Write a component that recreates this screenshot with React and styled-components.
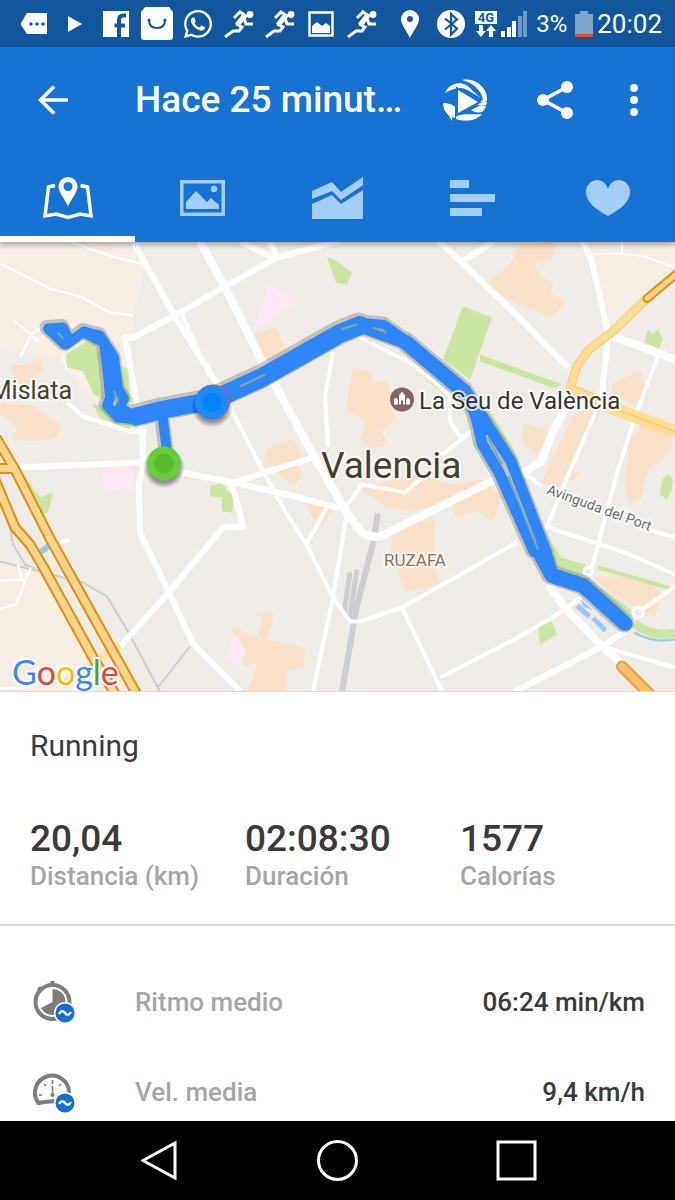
import React from 'react';
import styled, { createGlobalStyle } from 'styled-components';
import { FaWhatsapp } from 'react-icons/fa';

const GlobalStyle = createGlobalStyle`
  * {
    box-sizing: border-box;
  }
  body {
    margin: 0;
    background: #fff;
    color: #3a3a3a;
    font-family: Roboto, 'Noto Sans', sans-serif;
  }
  button {
    border: 0;
    padding: 0;
    background: none;
    color: inherit;
    cursor: pointer;
  }
  svg {
    display: block;
  }
`;

const Screen = styled.div`
  display: flex;
  flex-direction: column;
  height: 100vh;
`;

const StatusBar = styled.div`
  display: flex;
  flex: none;
  align-items: center;
  justify-content: space-between;
  height: 47px;
  padding: 0 13px;
  background: #12579d;
  color: #fff;
`;

const StatusGroup = styled.div`
  display: flex;
  align-items: center;
  gap: ${(props) => props.$gap || 0}px;
`;

const StatusSlot = styled.span`
  display: flex;
  justify-content: center;
  width: 41px;
`;

const StatusText = styled.span`
  font-size: ${(props) => (props.$large ? 26 : 24)}px;
  line-height: 32px;
  padding: 0 ${(props) => (props.$large ? 0 : 4)}px;
`;

const Header = styled.header`
  position: relative;
  flex: none;
  background: #1673d3;
  color: #fff;
  box-shadow: 0 2px 6px rgba(0, 0, 0, 0.4);
`;

const ActionBar = styled.div`
  display: flex;
  align-items: center;
  height: 106px;
  padding-right: 8px;
`;

const IconButton = styled.button`
  display: flex;
  flex: none;
  align-items: center;
  justify-content: center;
  width: ${(props) => props.$width}px;
  height: 90px;
`;

const Title = styled.h1`
  flex: 1;
  min-width: 0;
  margin: 0 0 0 30px;
  overflow: hidden;
  white-space: nowrap;
  font-size: 37px;
  font-weight: 500;
  line-height: 48px;
`;

const Tabs = styled.nav`
  display: flex;
  height: 89px;
`;

const Tab = styled.button`
  display: flex;
  flex: 1;
  align-items: center;
  justify-content: center;
  box-shadow: ${(props) => (props.$active ? 'inset 0 -6px #fff' : 'none')};
  color: ${(props) => (props.$active ? '#fff' : '#a5cef7')};
`;

const MapArea = styled.div`
  flex: none;
  height: 450px;
  overflow: hidden;
  border-bottom: 1px solid #dcdad6;

  svg {
    width: 100%;
    height: 100%;
  }
`;

const Details = styled.main`
  flex: 1;
  min-height: 0;
  overflow-y: auto;
  scrollbar-width: none;
`;

const Summary = styled.section`
  padding: 36px 0 33px 30px;
  border-bottom: 2px solid #e0e0e0;
`;

const Sport = styled.h2`
  margin: 0 0 53px;
  font-size: 30px;
  font-weight: 400;
  line-height: 36px;
`;

const Stats = styled.div`
  display: grid;
  grid-template-columns: repeat(3, 1fr);
`;

const StatValue = styled.div`
  font-size: 37px;
  font-weight: 500;
  line-height: 44px;
`;

const StatLabel = styled.div`
  color: #a6a6a6;
  font-size: 26px;
  font-weight: 500;
  line-height: 30px;
`;

const RowList = styled.ul`
  margin: 0;
  padding: 31px 30px 0 32px;
  list-style: none;
`;

const Row = styled.li`
  display: flex;
  align-items: center;
  height: 90px;
  font-size: 26px;
  font-weight: 500;
  line-height: 30px;
`;

const RowLabel = styled.span`
  flex: 1;
  margin-left: 59px;
  color: #a6a6a6;
`;

const NavBar = styled.nav`
  display: flex;
  flex: none;
  justify-content: center;
  height: 79px;
  background: #000;
  color: #fff;
`;

const NavButton = styled.button`
  display: flex;
  flex: 0 1 179px;
  align-items: center;
  justify-content: center;
`;

/* status bar icons */

const Runner = () => (
  <svg width="30" height="28" viewBox="0 0 30 28" fill="none" stroke="#fff" strokeWidth="3">
    <circle cx="26" cy="4.500" r="3.400" fill="#fff" stroke="none" />
    <path d="M10 8l6-6 6 4-8 9" />
    <path d="M20 6l-7 9" strokeWidth="5" />
    <path d="M12 14l6 3-3 4H9l-8 6M20 8l2 6h7" />
  </svg>
);

const Message = () => (
  <svg width="26" height="22" viewBox="0 0 26 22">
    <path d="M6 0h20v21H6L0 12v-2z" fill="#fff" />
    <g fill="#12579d">
      <circle cx="10" cy="11" r="1.700" />
      <circle cx="16" cy="11" r="1.700" />
      <circle cx="22" cy="11" r="1.700" />
    </g>
  </svg>
);

const Play = () => (
  <svg width="14" height="16" viewBox="0 0 14 16">
    <path d="M0 0l14 8-14 8z" fill="#fff" />
  </svg>
);

const Facebook = () => (
  <svg width="26" height="26" viewBox="0 0 26 26">
    <path d="M0 0h26v26H0z" fill="#fff" />
    <path d="M16 26V9q0-4.500 4.500-4.500H23M11.500 14.500H22" fill="none" stroke="#12579d" strokeWidth="4" />
  </svg>
);

const Bag = () => (
  <svg width="32" height="33" viewBox="0 0 32 33">
    <path d="M4 0h24l4 5v25q0 3-3 3H3q-3 0-3-3V5z" fill="#fff" />
    <path d="M8 13q0 8 8 8t8-8" fill="none" stroke="#12579d" strokeWidth="2" />
    <circle cx="8" cy="13" r="1.600" fill="#12579d" />
    <circle cx="24" cy="13" r="1.600" fill="#12579d" />
  </svg>
);

const Picture = () => (
  <svg width="26" height="26" viewBox="0 0 26 26">
    <path d="M1.500 1.500h23v23h-23z" fill="none" stroke="#fff" strokeWidth="2.400" />
    <path d="M4 22v-7l5-4 5 4 4-3 4 3v7z" fill="#fff" />
  </svg>
);

const Pin = () => (
  <svg width="18" height="28" viewBox="0 0 18 28">
    <path d="M9 0a9 9 0 0 1 9 9c0 6-6 12-9 19C6 21 0 15 0 9a9 9 0 0 1 9-9z" fill="#fff" />
    <circle cx="9" cy="9" r="3" fill="#12579d" />
  </svg>
);

const Bluetooth = () => (
  <svg width="28" height="28" viewBox="0 0 28 28">
    <circle cx="14" cy="14" r="14" fill="#fff" />
    <path d="M8 8.500l12 10-6 6V4l6 5.500L8 19.500" fill="none" stroke="#12579d" strokeWidth="2.200" />
  </svg>
);

const Network = () => (
  <svg width="22" height="28" viewBox="0 0 22 28">
    <path d="M0 1h22v13H0z" fill="#fff" />
    <text x="11" y="12" textAnchor="middle" fontSize="13" fontWeight="700" fill="#12579d">4G</text>
    <path d="M4 15h4v6h3l-5 6-5-6h3zM14 27h4v-6h3l-5-6-5 6h3z" fill="#fff" />
  </svg>
);

const Signal = () => (
  <svg width="27" height="28" viewBox="0 0 27 28" fill="#fff">
    <path d="M0 21h4v6H0zM6 17h4v10H6zM11 11h4v16h-4z" />
    <path d="M17 6h4v21h-4zM22 1h4v26h-4z" opacity=".4" />
  </svg>
);

const Battery = () => (
  <svg width="18" height="28" viewBox="0 0 18 28">
    <path d="M5 1h8v3h5v23H0V4h5z" fill="#7fa4cb" />
    <path d="M0 24h18v3H0z" fill="#dc4b2e" />
  </svg>
);

/* action bar icons */

const BackIcon = () => (
  <svg width="30" height="30" viewBox="0 0 30 30" fill="none" stroke="currentColor" strokeWidth="3.600">
    <path d="M30 15H3M16 1.500L2.500 15 16 28.500" />
  </svg>
);

const ReplayIcon = () => (
  <svg width="44" height="42" viewBox="0 0 44 42" fill="currentColor">
    <path d="M19 1c14-3 26 8 25 21h-4C40 14 32 4 19 1z" />
    <path d="M2 14C6 5 15 2 23 6c5 3 8 8 15 13-6-3-13-9-20-10C12 9 7 11 2 14z" />
    <path d="M0 24c5 0 9 1 12 4v11l-3-1v4l-3-5C2 33 0 29 0 24z" />
    <path d="M28 31l8-4 7 0c-1 3-2 4-4 6-4 1-8 0-11-2zM34 25l5-4 5 2-1 3c-4 1-7 1-9-1z" />
    <path d="M13 37c10-3 18-1 26-2-6 7-16 8-26 5z" />
    <path d="M15 11l20 12-20 11z" stroke="#1673d3" strokeWidth="4" paintOrder="stroke" />
  </svg>
);

const ShareIcon = () => (
  <svg width="36" height="38" viewBox="0 0 36 38" fill="currentColor">
    <path d="M30 6L6 19l24 13" fill="none" stroke="currentColor" strokeWidth="3.600" />
    <circle cx="6" cy="19" r="6" />
    <circle cx="30" cy="6" r="6" />
    <circle cx="30" cy="32" r="6" />
  </svg>
);

const MoreIcon = () => (
  <svg width="8" height="32" viewBox="0 0 8 32" fill="currentColor">
    <circle cx="4" cy="4" r="4" />
    <circle cx="4" cy="16" r="4" />
    <circle cx="4" cy="28" r="4" />
  </svg>
);

/* tab icons */

const MapIcon = () => (
  <svg width="52" height="44" viewBox="0 0 52 44">
    <path
      d="M13 9.500L6.500 11 3 40l11-2 12 3.500L38 38l11 2-3.500-29L38.500 9.500"
      fill="none"
      stroke="currentColor"
      strokeWidth="3.400"
    />
    <path
      d="M26 1a9.500 9.500 0 0 1 9.500 9.500c0 6-5.500 11-9.500 20-4-9-9.500-14-9.500-20A9.500 9.500 0 0 1 26 1zm0 5a4.500 4.500 0 1 0 0 9 4.500 4.500 0 0 0 0-9z"
      fill="currentColor"
    />
  </svg>
);

const PhotoIcon = () => (
  <svg width="45" height="36" viewBox="0 0 45 36" fill="currentColor">
    <path d="M0 0h45v36H0zm3.500 3.500v29h38v-29z" fillRule="evenodd" />
    <path d="M6 22l10-11 11 11 4-4 8 7v4H6z" />
    <circle cx="34" cy="9" r="3.200" />
  </svg>
);

const ChartIcon = () => (
  <svg width="51" height="42" viewBox="0 0 51 42" fill="currentColor">
    <path d="M0 14L20 5l9 10L51 0v8L29 23l-9-9L0 22z" />
    <path d="M0 27l20-9 9 9 22-14v29H0z" />
  </svg>
);

const LapsIcon = () => (
  <svg width="45" height="36" viewBox="0 0 45 36" fill="currentColor">
    <path d="M0 0h19v8H0zM0 14h45v8H0zM0 28h32v8H0z" />
  </svg>
);

const HeartIcon = () => (
  <svg width="46" height="38" viewBox="0 0 46 38" fill="currentColor">
    <path d="M23 37C12 31 1 24 1 13A11.500 11.500 0 0 1 12 1c5 0 9 3 11 9 2-6 6-9 11-9a11.500 11.500 0 0 1 11 12c0 11-11 18-22 24z" />
  </svg>
);

/* list icons */

const Average = () => (
  <g stroke="none">
    <circle cx="33" cy="33" r="11" fill="#fff" />
    <circle cx="33" cy="33" r="9.500" fill="#136fd0" />
    <path d="M27 34q3-5 6-1t6-1" fill="none" stroke="#fff" strokeWidth="2.400" />
  </g>
);

const PaceIcon = () => (
  <svg width="44" height="44" viewBox="0 0 44 44">
    <circle cx="20.500" cy="22" r="17" fill="none" stroke="#7d7d7d" strokeWidth="4" />
    <path d="M18.500 1h4v4h-4zM5 9l3-3 2 3-3 3z" fill="#7d7d7d" />
    <path d="M20.500 22V9a13 13 0 1 1-11.500 19z" fill="#7d7d7d" />
    <Average />
  </svg>
);

const SpeedIcon = () => (
  <svg width="44" height="44" viewBox="0 0 44 44" fill="none" stroke="#7d7d7d">
    <path d="M37 23A17 17 0 1 0 6.500 33q14-2.500 18-1.500" strokeWidth="4" />
    <path d="M20.500 10v4M20.500 16v8M12 14l2 2M29 14l-2 2M7 25h3M34 25h-3" strokeWidth="1.600" />
    <circle cx="20.500" cy="25" r="1.600" fill="#7d7d7d" />
    <Average />
  </svg>
);

const peachBlocks = [
  '255,333 277,328 285,353 267,362 257,345',
  '267,448 293,440 303,457 277,467 264,463',
  '10,364 25,366 40,359 44,372 30,378 30,390 14,382',
  '12,404 30,405 60,425 58,438 35,442 11,440 18,428 0,415 0,404',
  '520,244 557,243 552,258 535,264 540,278 553,282 551,294 565,303 552,318 528,309 502,297 487,283 502,271 512,262',
  '353,369 373,372 371,383 388,381 390,404 396,420 381,432 388,444 372,450 360,440 367,424 358,416 346,412 349,388',
  '524,424 547,430 548,441 536,455 522,444',
  '573,416 604,400 597,420 570,468 580,476 560,488 542,483 548,468',
  '630,375 641,370 645,392 634,405 612,398 612,385',
  '645,420 672,430 671,452 647,472 642,498 628,505 625,478 630,442',
  '360,490 377,484 417,475 452,485 480,480 502,497 493,522 478,512 455,517 450,502 412,512 387,508',
  '395,525 435,520 434,568 440,584 405,592 390,549',
  '594,577 645,578 662,595 655,617 640,610 604,588',
  '230,627 257,638 263,620 256,615 273,613 272,625 267,640 305,648 303,668 287,672 287,692 248,692 258,662 246,668',
  '275,470 298,465 303,475 294,486 282,478',
  '304,500 333,508 322,527 312,518',
];

const parks = [
  '463,307 492,318 470,380 443,360',
  '480,355 562,385 555,389 480,362',
  '327,258 334,260 352,273 347,285 336,283',
  '66,355 90,340 101,348 104,400 94,395 83,372 67,368',
  '92,404 110,410 133,424 128,430 100,418',
  '121,366 129,370 129,392 134,402 124,405',
  '25,477 40,498 53,493 48,513 42,515 23,484',
  '210,486 222,484 233,498 233,513 222,512 222,498 210,497',
  '538,628 552,622 557,635 540,645',
  '546,532 561,558 585,565 590,580 636,614 629,618 584,582 558,575',
  '662,480 668,475 673,480 672,490 667,500 660,495',
  '648,330 652,335 658,330 663,340 659,349 644,343',
];

const Roads = () => (
  <g fill="none" stroke="#fff" strokeLinejoin="round">
    <g strokeWidth="2">
      <path d="M70 242l42 15 34 8M0 264l50 25 30 8 30 16 23 3M14 321l25 21M20 358l12-24 15-10M62 355l5 15M593 255l29-1 23 3 30 11M622 254v-12" />
      <path d="M0 581l25-1 6-12M18 565l4 16M28 575l-12 30-16 4M0 689l30-1" />
    </g>
    <g strokeWidth="4">
      <path d="M230 407l32 63 25 45 20 31 26 52 17 24h10l42-14 115-65" />
      <path d="M348 508l-15 90-20 94M333 353l-8 44 3 50M67 403l16 14 47 15h17M182 315l28 62" />
      <path d="M358 337l50 25 27 21 15 14v25l10 15 12-5-30 23M335 508h10l17-23 43 8 17-15" />
      <path d="M658 357l-23 60-17 53-26 98M602 398l-35 80-21 52M522 472l20 15M545 527l80 26 50 22M648 530l27 8" />
      <path d="M440 678l78-40 44-26 20-15M602 647l73 21M638 613l37-26M327 508l-20 35M402 608l40 84" />
      <path d="M60 543l10-3" />
    </g>
    <g strokeWidth="6">
      <path d="M340 241l-63 17-54 30-46 27-44 23h-8l12 67 5 25 1 35-4 20 1 48 30 62 23 49 47 47" />
      <path d="M133 242l15 27 27 48 40 64 17 29M240 242l37 18M270 242l8 18M120 647l47-52 56-67 20-1-8-32-5-12" />
      <path d="M182 473l51 10 54 12 53 14M233 483l80-25M20 468l120-5M435 238l27 25 56 54 50 51M462 262l32-20" />
      <path d="M582 240l10 22 15 66 1 10-5 45-1 20M605 336l-15 12M515 692l87-45 23-15" />
    </g>
    <g strokeWidth="8">
      <path d="M200 242l23 42 37 74 53 97 35 60 14 18q8 5 18 4l115-57 25-4 21-14 12-30 20-37M608 335l67 25" />
      <path d="M548 585l17 23 37 39 20 17" />
    </g>
    <g strokeWidth="3">
      <circle cx="588" cy="572" r="4" fill="#efece8" />
      <circle cx="638" cy="613" r="5" fill="#efece8" />
    </g>
  </g>
);

/* path and width of every stretch of the run */
const ROUTE = [
  ['M48 329l15-1 6 12-4 5zM66 345l18-13 16 4 14 22 4 31 6 10-4 9 16 10', 10],
  ['M84 333l20 10 4 32 2 23-3 8 11 12 20 2', 10],
  ['M110 352l4 38', 9],
  ['M136 417l28-7 48-9', 18],
  ['M212 401l50-23 78-44 20-8', 19],
  ['M340 330l22-7 22 2 24 17 55 47', 9],
  ['M355 329l8 0 22 8 19 7', 10],
  ['M406 343l58 49 10 16', 15],
  ['M474 408l8 36 17 29 35 79', 11],
  ['M474 404l37 58 35 90 6 20', 11],
  ['M474 406l8 24', 15],
  ['M538 550l14 26 31 10 42 38', 15],
  ['M163 420l4 32', 10],
];

const Route = ({ color, grow, ...rest }) => (
  <g fill="none" stroke={color} strokeLinejoin="round" strokeLinecap="round" {...rest}>
    {ROUTE.map(([d, width]) => (
      <path key={d} d={d} strokeWidth={width + grow} />
    ))}
  </g>
);

const RouteMap = () => (
  <svg viewBox="0 242 675 450" preserveAspectRatio="xMidYMid slice">
    <defs>
      <radialGradient id="markerShadow">
        <stop offset="0.700" stopColor="#000" stopOpacity="0.400" />
        <stop offset="1" stopColor="#000" stopOpacity="0" />
      </radialGradient>
    </defs>
    <path d="M0 242h675v450H0z" fill="#efece8" />
    <path d="M0 242h133l12 26-12 50-2 70-30 20-45-50-56-10zM0 560l40 14 54 84 20 34H0zM588 242h87v32l-42 32-26 18z" fill="#f6ede4" />
    <g fill="#f8e0c9">
      {peachBlocks.map((points) => <polygon key={points} points={points} />)}
    </g>
    <g fill="#fce7f3">
      <polygon points="270,282 276,293 284,291 292,305 253,332" />
      <polygon points="102,468 134,466 132,490 104,492" />
      <polygon points="232,637 238,636 246,653 240,662 228,658" />
    </g>
    <g fill="#cbe6a0">
      {parks.map((points) => <polygon key={points} points={points} />)}
    </g>
    <path d="M358 336l50 26 57 48M488 412l22 35 32 85M598 568l77 22" stroke="#cbe6a0" strokeWidth="4" fill="none" />
    <path d="M634 624q18 14 41 10" stroke="#cbe6a0" strokeWidth="9" fill="none" />
    <path d="M634 633q20 11 41 7" stroke="#9cc7fb" strokeWidth="2" fill="none" />
    <path d="M575 608l4-4 12 11-3 4zM591 620l4-3 12 12-3 4zM581 600l12 11-10-4zM39 550l8-6 4 5-9 6z" fill="#9cc7fb" />
    <g fill="none" stroke="#cdced0" strokeWidth="2">
      <path d="M0 562l43 11 40 10 24 14 21 35 32 60M190 647l-33 42M10 528l3 17 12 20 18 8" />
      <path d="M378 514l-5 30-16 62-15 86" strokeWidth="6" />
      <path d="M350 573l-6 42M357 570l-8 52" strokeWidth="5" />
    </g>
    <Roads />
    {/* yellow and orange highways */}
    <g fill="none" strokeLinejoin="round">
      <path d="M646 300l-31 30-27 21-11 16-7 22 37 15 36 15 34 14" stroke="#f2c978" strokeWidth="9" />
      <path d="M646 300l-31 30-27 21-11 16-7 22 37 15 36 15 34 14" stroke="#fddf93" strokeWidth="7" />
      <path d="M608 407l67 25" stroke="#fddf93" strokeWidth="13" />
      <path d="M612 408l63 24" stroke="#efc168" strokeWidth="1" />
      <path d="M64 684l56-38" stroke="#fbe3a8" strokeWidth="8" />
      <path d="M-6 478l21 50 15 17 13 22 50 91 28 46M-4 438l20 34 34 67 50 90 42 75M-4 469h20" stroke="#dc930f" strokeWidth="11" />
      <path d="M-6 478l21 50 15 17 13 22 50 91 28 46M-4 438l20 34 34 67 50 90 42 75M-4 469h20" stroke="#fdd48b" strokeWidth="7" />
      <g strokeLinecap="round">
        <path d="M647 299l36-30" stroke="#dc930f" strokeWidth="9" />
        <path d="M647 299l36-30" stroke="#fdd48b" strokeWidth="5" />
        <path d="M622 667l36 36" stroke="#e6a044" strokeWidth="12" />
        <path d="M622 667l36 36" stroke="#fcbf6c" strokeWidth="8" />
      </g>
    </g>
    <Route color="#8f897d" grow={5} opacity="0.450" transform="translate(-1 -1)" />
    <Route color="#2e86fb" grow={0} />
    <path d="M240 387l25-12M341 330l16-5M373 328l13 5M58 333l5 6M114 391l4 12M488 438l14 27M508 476l30 74" stroke="#7fa79a" strokeWidth="2" />
    <circle cx="212" cy="407" r="21" fill="url(#markerShadow)" />
    <circle cx="164" cy="468" r="21" fill="url(#markerShadow)" />
    <circle cx="213" cy="402" r="17" fill="#d34d7c" />
    <circle cx="212" cy="403" r="17" fill="#2089f8" />
    <circle cx="212" cy="403" r="10" fill="#0784fa" />
    <circle cx="164" cy="464" r="17" fill="#66cd3c" />
    <circle cx="164" cy="464" r="10" fill="#55bd27" />
    <circle cx="402" cy="400" r="12" fill="#83655f" />
    <path d="M394 405v-5l2-2 2 2v5zM399 405v-9l3-4 3 4v9h-2v-4h-2v4zM406 405v-5l2-2 2 2v5z" fill="#fff" />
    <g fill="#453f32" stroke="#fff" strokeOpacity="0.750" strokeWidth="4" strokeLinejoin="round" paintOrder="stroke">
      <text x="72" y="399" textAnchor="end" fontSize="25">Mislata</text>
      <text x="419" y="409" fontSize="24" fill="#37342f">La Seu de València</text>
      <text x="321" y="478" fontSize="37">Valencia</text>
      <text x="384" y="566" fontSize="17" fill="#8c7259">RUZAFA</text>
      <text x="546" y="494" fontSize="14" fill="#6b6b6b" transform="rotate(20 546 494)">Avinguda del Port</text>
    </g>
    <text x="12" y="685" fontFamily="Lato, sans-serif" fontSize="34" stroke="#fff" strokeWidth="4" paintOrder="stroke">
      <tspan fill="#4285f4">G</tspan>
      <tspan fill="#ea4335">o</tspan>
      <tspan fill="#fbbc05">o</tspan>
      <tspan fill="#4285f4">g</tspan>
      <tspan fill="#34a853">l</tspan>
      <tspan fill="#ea4335">e</tspan>
    </text>
  </svg>
);

const Whatsapp = () => <FaWhatsapp size={32} />;

const statusIcons = [Message, Play, Facebook, Bag, Whatsapp, Runner, Runner, Picture, Runner];

const tabs = [
  { name: 'Mapa', Icon: MapIcon },
  { name: 'Fotos', Icon: PhotoIcon },
  { name: 'Gráficos', Icon: ChartIcon },
  { name: 'Vueltas', Icon: LapsIcon },
  { name: 'Frecuencia cardiaca', Icon: HeartIcon },
];

const stats = [
  { value: '20,04', label: 'Distancia (km)' },
  { value: '02:08:30', label: 'Duración' },
  { value: '1577', label: 'Calorías' },
];

const rows = [
  { label: 'Ritmo medio', value: '06:24 min/km', Icon: PaceIcon },
  { label: 'Vel. media', value: '9,4 km/h', Icon: SpeedIcon },
];

const App = () => {
  return (
    <Screen>
      <GlobalStyle />
      <StatusBar>
        <StatusGroup>
          {statusIcons.map((Icon, i) => (
            <StatusSlot key={i}><Icon /></StatusSlot>
          ))}
        </StatusGroup>
        <StatusGroup $gap={4}>
          <StatusGroup>
            <StatusSlot><Pin /></StatusSlot>
            <StatusSlot><Bluetooth /></StatusSlot>
          </StatusGroup>
          <Network />
          <Signal />
          <StatusText>3%</StatusText>
          <Battery />
          <StatusText $large>20:02</StatusText>
        </StatusGroup>
      </StatusBar>
      <Header>
        <ActionBar>
          <IconButton $width={105} aria-label="Atrás">
            <BackIcon />
          </IconButton>
          <Title>Hace 25 minut…</Title>
          <IconButton $width={90} aria-label="Reproducir">
            <ReplayIcon />
          </IconButton>
          <IconButton $width={90} aria-label="Compartir">
            <ShareIcon />
          </IconButton>
          <IconButton $width={67} aria-label="Más opciones">
            <MoreIcon />
          </IconButton>
        </ActionBar>
        <Tabs>
          {tabs.map(({ name, Icon }, i) => (
            <Tab key={name} $active={i === 0} aria-label={name}>
              <Icon />
            </Tab>
          ))}
        </Tabs>
      </Header>
      <MapArea>
        <RouteMap />
      </MapArea>
      <Details>
        <Summary>
          <Sport>Running</Sport>
          <Stats>
            {stats.map(({ value, label }) => (
              <div key={label}>
                <StatValue>{value}</StatValue>
                <StatLabel>{label}</StatLabel>
              </div>
            ))}
          </Stats>
        </Summary>
        <RowList>
          {rows.map(({ label, value, Icon }) => (
            <Row key={label}>
              <Icon />
              <RowLabel>{label}</RowLabel>
              <span>{value}</span>
            </Row>
          ))}
        </RowList>
      </Details>
      <NavBar>
        <NavButton aria-label="Volver">
          <svg width="36" height="41" viewBox="0 0 36 41" fill="none" stroke="currentColor" strokeWidth="3">
            <path d="M34 3v35L2 20.500z" />
          </svg>
        </NavButton>
        <NavButton aria-label="Inicio">
          <svg width="41" height="41" viewBox="0 0 41 41" fill="none" stroke="currentColor" strokeWidth="3">
            <circle cx="20.500" cy="20.500" r="19" />
          </svg>
        </NavButton>
        <NavButton aria-label="Recientes">
          <svg width="41" height="41" viewBox="0 0 41 41" fill="none" stroke="currentColor" strokeWidth="3">
            <path d="M2 2h37v37H2z" />
          </svg>
        </NavButton>
      </NavBar>
    </Screen>
  );
};

export default App;
